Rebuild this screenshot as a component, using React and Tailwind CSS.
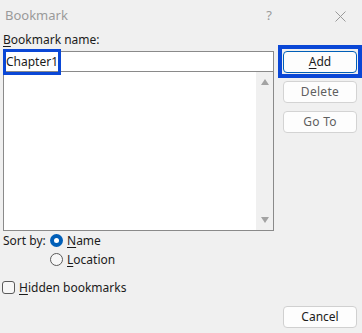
import React from "react";

const FONT = { fontFamily: '"Segoe UI", "Noto Sans", "Open Sans", sans-serif' };

function Btn({ children, disabled, primary }) {
  return (
    <button
      className={
        "w-[74px] h-[22px] rounded-[4px] border bg-[#fdfdfd] text-[12px] leading-none flex items-center justify-center " +
        (primary
          ? "border-[#005fb8] text-[#1b1b1b]"
          : disabled
          ? "border-[#d3d3d3] text-[#5f5f5f] tracking-[0.3px]"
          : "border-[#d0d0d0] text-[#1b1b1b]")
      }
    >
      {children}
    </button>
  );
}

function Radio({ checked }) {
  return checked ? (
    <span className="w-[13px] h-[13px] rounded-full bg-[#005fb8] flex items-center justify-center">
      <span className="w-[5px] h-[5px] rounded-full bg-white" />
    </span>
  ) : (
    <span className="w-[13px] h-[13px] rounded-full border border-[#5a5a5a] bg-[#f7f7f7]" />
  );
}

export default function App() {
  return (
    <div
      className="relative w-[362px] h-[333px] bg-[#f0f0f0] text-[#1b1b1b] overflow-hidden"
      style={FONT}
    >
      {/* title bar */}
      <div className="h-[32px] flex items-center">
        <span className="ml-[5px] text-[13px] text-[#9a9a9a]">Bookmark</span>
        <span className="ml-auto mr-[63px] text-[13px] text-[#9a9a9a]">?</span>
        <svg className="mr-[16px]" width="11" height="11" viewBox="0 0 11 11">
          <path d="M0.5 0.5 L10.5 10.5 M10.5 0.5 L0.5 10.5" stroke="#9a9a9a" strokeWidth="1" />
        </svg>
      </div>

      <div className="flex h-[301px]">
        {/* left column */}
        <div className="ml-[3px] w-[271px] flex flex-col">
          <div className="h-[16px] text-[12px] leading-[16px]">
            <u className="underline-offset-2">B</u>ookmark name:
          </div>
          <div className="mt-[3px] h-[21px] border border-[#8a8a8a] bg-white flex items-center pl-[2px] text-[12px]">
            Chapter1
          </div>
          <div className="h-[159px] border border-t-0 border-[#8a8a8a] bg-white flex">
            <div className="flex-1" />
            <div className="w-[17px] bg-[#f0f0f0] flex flex-col items-center justify-between py-[7px]">
              <svg width="8" height="6" viewBox="0 0 8 6">
                <path d="M4 0 L8 6 L0 6 Z" fill="#a3a3a3" />
              </svg>
              <svg width="8" height="6" viewBox="0 0 8 6">
                <path d="M0 0 L8 0 L4 6 Z" fill="#a3a3a3" />
              </svg>
            </div>
          </div>
          <div className="h-[19px] flex items-center text-[12px]">
            <span className="w-[47px]">Sort by:</span>
            <Radio checked />
            <span className="ml-[4px]">
              <u className="underline-offset-2">N</u>ame
            </span>
          </div>
          <div className="h-[19px] flex items-center text-[12px] pl-[47px]">
            <Radio />
            <span className="ml-[4px]">
              <u className="underline-offset-2">L</u>ocation
            </span>
          </div>
          <div className="mt-[9px] h-[19px] flex items-center text-[12px] -ml-[1px]">
            <span className="w-[13px] h-[13px] rounded-[3px] border border-[#5a5a5a] bg-[#f7f7f7]" />
            <span className="ml-[4px]">
              <u className="underline-offset-2">H</u>idden bookmarks
            </span>
          </div>
        </div>

        {/* right column */}
        <div className="ml-[9px] w-[74px] flex flex-col pt-[19px] pb-[5px] gap-[8px]">
          <Btn primary>
            <span>
              <u className="underline-offset-2">A</u>dd
            </span>
          </Btn>
          <Btn disabled>Delete</Btn>
          <Btn disabled>Go To</Btn>
          <div className="mt-auto">
            <Btn>Cancel</Btn>
          </div>
        </div>
      </div>

      {/* highlight annotations */}
      <div className="absolute left-[3px] top-[49px] w-[58px] h-[26px] border-[3px] border-[#0a47d6]" />
      <div className="absolute left-[278px] top-[45px] w-[84px] h-[33px] border-[4px] border-[#0a47d6]" />
    </div>
  );
}
